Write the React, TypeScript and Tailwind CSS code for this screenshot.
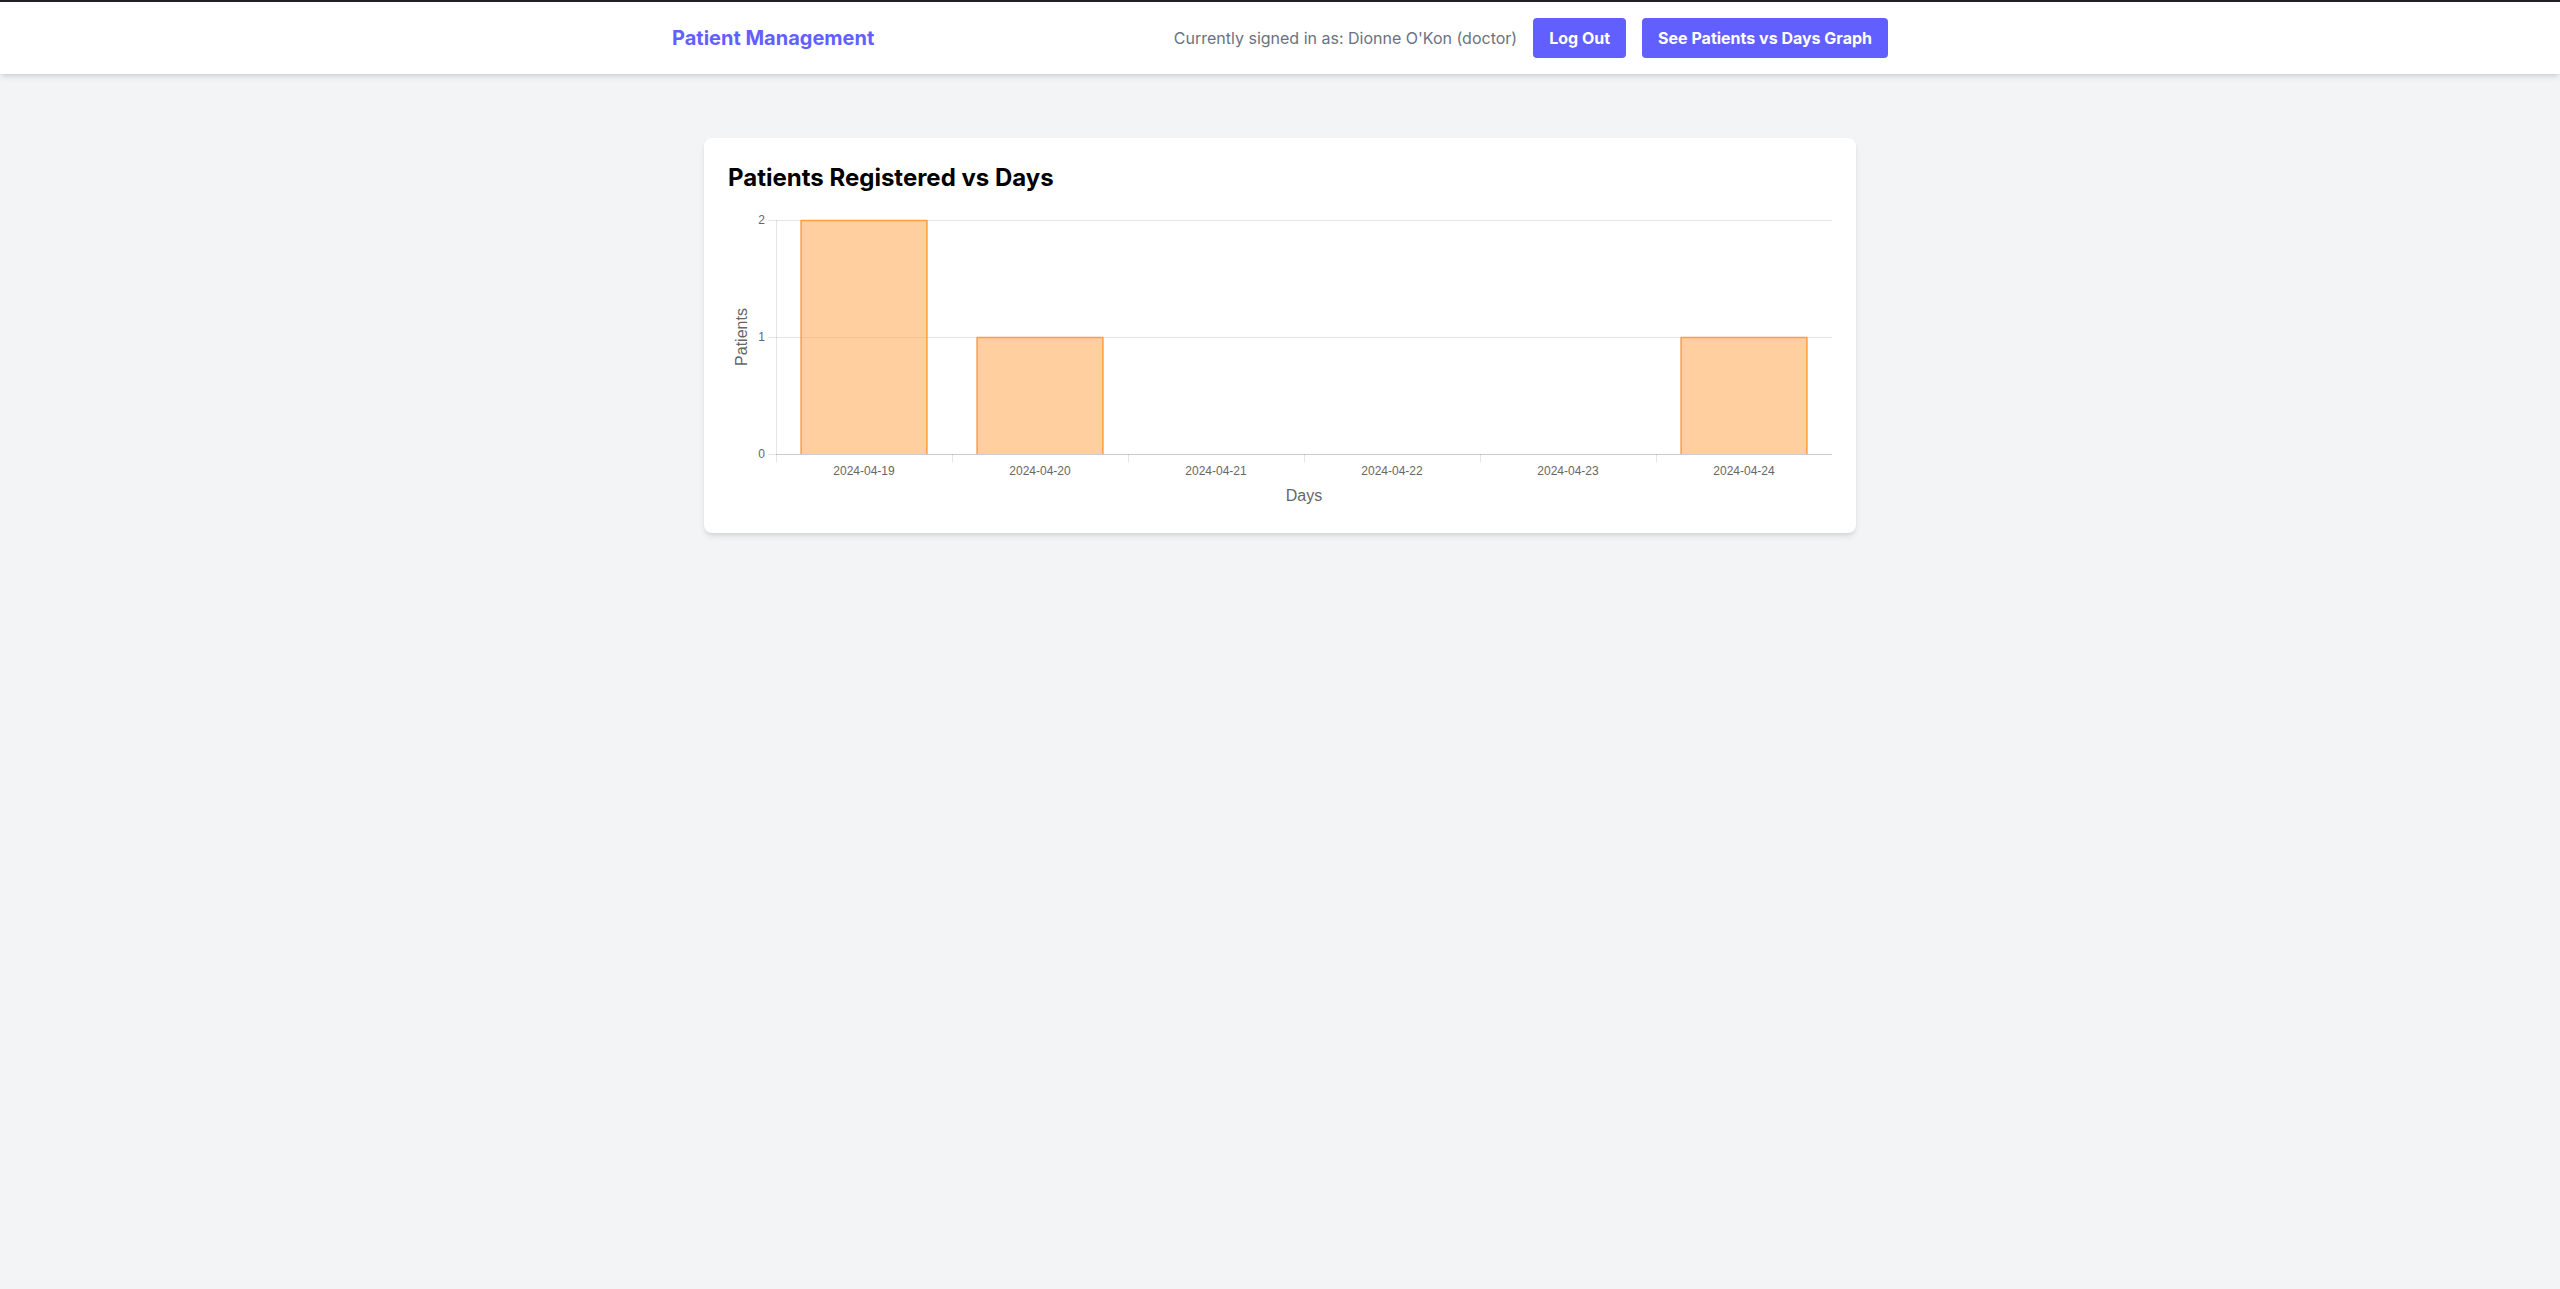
import React from 'react';

type DayCount = { day: string; count: number };

const data: DayCount[] = [
  { day: '2024-04-19', count: 2 },
  { day: '2024-04-20', count: 1 },
  { day: '2024-04-21', count: 0 },
  { day: '2024-04-22', count: 0 },
  { day: '2024-04-23', count: 0 },
  { day: '2024-04-24', count: 1 },
];

// chart geometry, in svg pixels
const W = 1104;
const H = 299;
const left = 48;
const top = 10;
const zero = 244;
const maxY = 2;
const slot = (W - left) / data.length;
const barW = slot * 0.72;

const yFor = (v: number) => zero - ((zero - top) * v) / maxY;

function PatientsChart() {
  const grid = 'rgba(0,0,0,0.1)';
  return (
    <svg width={W} height={H} className="block" style={{ fontFamily: '"Liberation Sans", Arial, sans-serif' }}>
      {[0, 1, 2].map((v) => (
        <g key={v}>
          <line x1={left - 8} x2={W} y1={yFor(v) + 0.5} y2={yFor(v) + 0.5} stroke={grid} />
          <text x={left - 11} y={yFor(v) + 4} textAnchor="end" fontSize="12" fill="#666">
            {v}
          </text>
        </g>
      ))}
      <line x1={left + 0.5} x2={left + 0.5} y1={top} y2={zero + 8} stroke={grid} />
      <line x1={left} x2={W} y1={zero + 0.5} y2={zero + 0.5} stroke={grid} />
      {data.map((d, i) => (
        <line
          key={d.day}
          x1={left + slot * (i + 1) + 0.5}
          x2={left + slot * (i + 1) + 0.5}
          y1={zero}
          y2={zero + 8}
          stroke={grid}
        />
      ))}
      {data.map((d, i) => {
        if (!d.count) return null;
        const x = left + slot * i + (slot - barW) / 2;
        const y = yFor(d.count);
        return (
          <g key={d.day}>
            <rect x={x} y={y} width={barW} height={zero - y} fill="rgba(255,159,64,0.5)" />
            <path
              d={`M${x + 0.5} ${zero} V${y + 0.5} H${x + barW - 0.5} V${zero}`}
              fill="none"
              stroke="rgb(255,159,64)"
              strokeWidth="1.5"
            />
          </g>
        );
      })}
      {data.map((d, i) => (
        <text key={d.day} x={left + slot * i + slot / 2} y={265} textAnchor="middle" fontSize="12" fill="#666">
          {d.day}
        </text>
      ))}
      <text x={left + (W - left) / 2} y={291} textAnchor="middle" fontSize="16" fill="#666">
        Days
      </text>
      <text
        x={0}
        y={0}
        transform={`translate(19 ${(top + zero) / 2}) rotate(-90)`}
        textAnchor="middle"
        fontSize="16"
        fill="#666"
      >
        Patients
      </text>
    </svg>
  );
}

export default function App() {
  return (
    <div className="min-h-screen bg-gray-100" style={{ fontFamily: 'Inter, "Noto Sans", sans-serif' }}>
      <header className="bg-white shadow-md border-t-2 border-[#202124]">
        <div className="max-w-7xl mx-auto px-8 py-4 flex items-center justify-between">
          <span className="text-xl font-bold text-indigo-500">Patient Management</span>
          <div className="flex items-center gap-4">
            <span className="text-gray-500">Currently signed in as: Dionne O'Kon (doctor)</span>
            <button className="bg-indigo-500 text-white font-bold px-4 py-2 rounded">Log Out</button>
            <button className="bg-indigo-500 text-white font-bold px-4 py-2 rounded">
              See Patients vs Days Graph
            </button>
          </div>
        </div>
      </header>

      <main className="max-w-6xl mx-auto mt-16">
        <div className="bg-white rounded-lg shadow-md p-6">
          <h1 className="text-2xl font-bold text-black mb-4">Patients Registered vs Days</h1>
          <PatientsChart />
        </div>
      </main>
    </div>
  );
}
